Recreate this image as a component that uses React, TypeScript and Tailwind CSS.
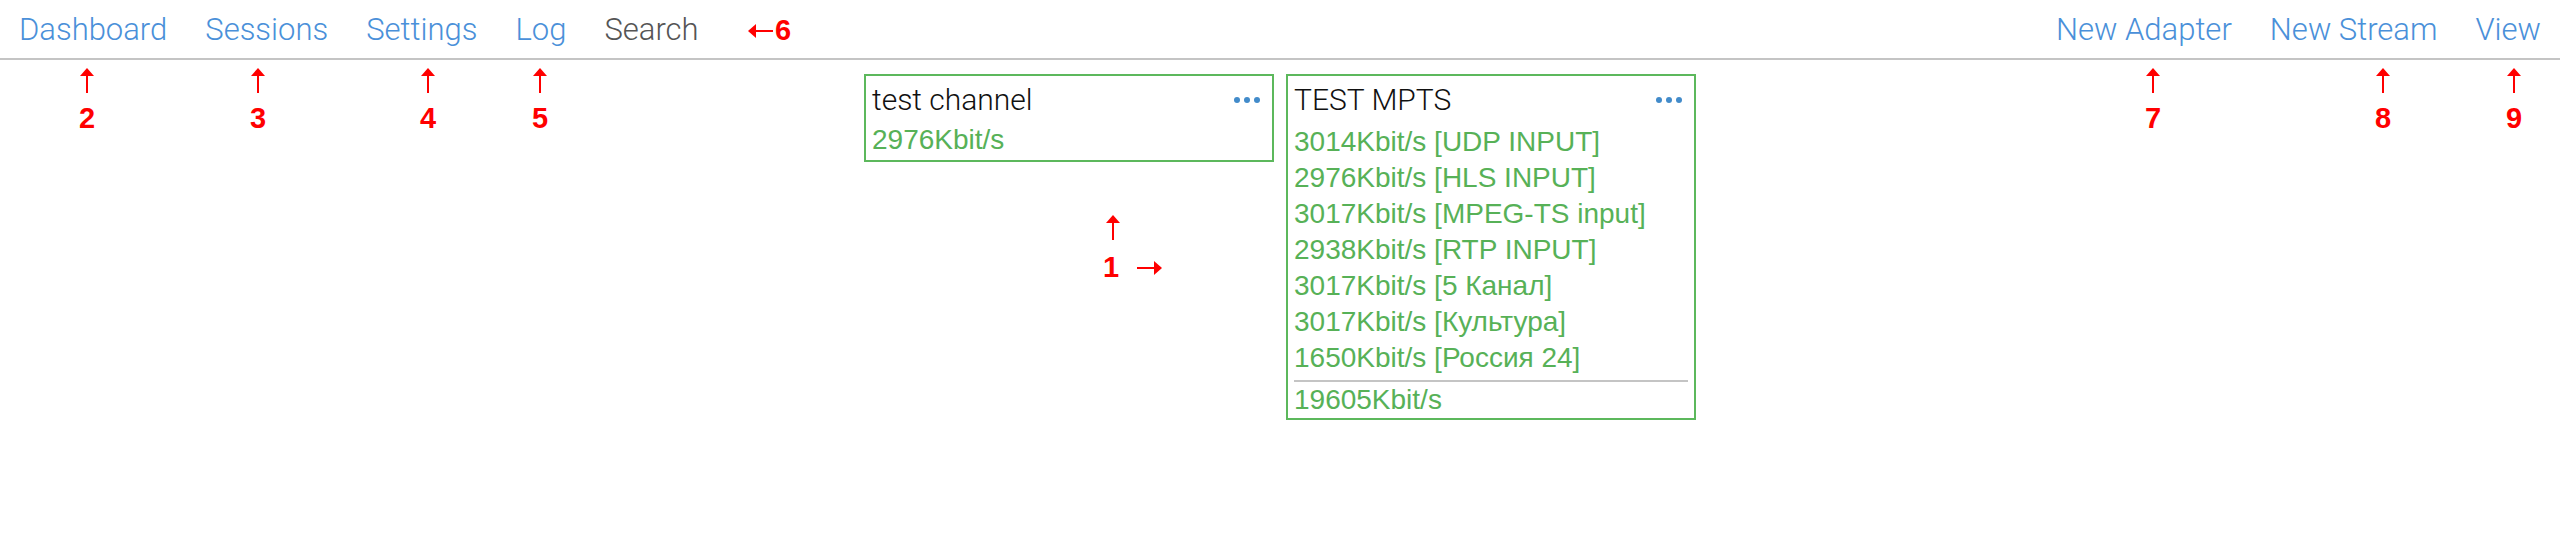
import React from "react"

const navLeft = [
    { label: "Dashboard", active: false },
    { label: "Sessions", active: false },
    { label: "Settings", active: false },
    { label: "Log", active: false },
    { label: "Search", active: true },
]

const navRight = ["New Adapter", "New Stream", "View"]

const mptsInputs = [
    "3014Kbit/s [UDP INPUT]",
    "2976Kbit/s [HLS INPUT]",
    "3017Kbit/s [MPEG-TS input]",
    "2938Kbit/s [RTP INPUT]",
    "3017Kbit/s [5 Канал]",
    "3017Kbit/s [Культура]",
    "1650Kbit/s [Россия 24]",
]

function Dots() {
    return (
        <div className="flex items-center gap-[4px] mr-[6px]">
            <span className="block w-[6px] h-[6px] rounded-full bg-[#428bca]" />
            <span className="block w-[6px] h-[6px] rounded-full bg-[#428bca]" />
            <span className="block w-[6px] h-[6px] rounded-full bg-[#428bca]" />
        </div>
    )
}

function CardTitle({ title }: { title: string }) {
    return (
        <div className="flex items-center justify-between leading-[40px]">
            <span className="text-[30px] font-light text-[#111111] font-['Roboto',sans-serif]">{title}</span>
            <Dots />
        </div>
    )
}

function UpArrow() {
    return (
        <svg width="14" height="25" viewBox="0 0 14 25" className="block">
            <polygon points="7,0 14,8 0,8" fill="#ff0000" />
            <rect x="6" y="7" width="2" height="18" fill="#ff0000" />
        </svg>
    )
}

function SideArrow({ dir }: { dir: "left" | "right" }) {
    return (
        <svg width="25" height="14" viewBox="0 0 25 14" className="block">
            {dir === "left" ? (
                <>
                    <polygon points="0,7 8,0 8,14" fill="#ff0000" />
                    <rect x="7" y="6" width="18" height="2" fill="#ff0000" />
                </>
            ) : (
                <>
                    <polygon points="25,7 17,0 17,14" fill="#ff0000" />
                    <rect x="0" y="6" width="18" height="2" fill="#ff0000" />
                </>
            )}
        </svg>
    )
}

// numbered markers under the nav links
const markers = [
    { n: "2", cls: "left-[72px]" },
    { n: "3", cls: "left-[243px]" },
    { n: "4", cls: "left-[413px]" },
    { n: "5", cls: "left-[525px]" },
    { n: "7", cls: "left-[2138px]" },
    { n: "8", cls: "left-[2368px]" },
    { n: "9", cls: "left-[2499px]" },
]

export default function App() {
    return (
        <div className="relative min-h-[552px] bg-white font-['Liberation_Sans',Arial,sans-serif]">
            <nav className="flex justify-between h-[60px] border-b-2 border-[#c4c4c4]">
                <ul className="flex">
                    {navLeft.map((item) => (
                        <li
                            key={item.label}
                            className={
                                "px-[19px] pt-[1px] leading-[57px] text-[31px] font-light font-['Roboto',sans-serif] " +
                                (item.active ? "text-[#555555]" : "text-[#4a90d9]")
                            }
                        >
                            {item.label}
                        </li>
                    ))}
                </ul>
                <ul className="flex">
                    {navRight.map((label) => (
                        <li
                            key={label}
                            className="px-[19px] pt-[1px] leading-[57px] text-[31px] font-light font-['Roboto',sans-serif] text-[#4a90d9]"
                        >
                            {label}
                        </li>
                    ))}
                </ul>
            </nav>

            <main className="flex justify-center items-start gap-[12px] pt-[14px]">
                <div className="w-[410px] border-2 border-[#5cb85c] px-[6px] pt-[4px]">
                    <CardTitle title="test channel" />
                    <div className="text-[28px] leading-[40px] text-[#57b157]">2976Kbit/s</div>
                </div>

                <div className="w-[410px] border-2 border-[#5cb85c] px-[6px] pt-[4px]">
                    <CardTitle title="TEST MPTS" />
                    <div className="mt-[4px]">
                        {mptsInputs.map((row) => (
                            <div key={row} className="text-[28px] leading-[36px] text-[#57b157]">
                                {row}
                            </div>
                        ))}
                    </div>
                    <div className="mt-[4px] h-[2px] bg-[#c4c4c4]" />
                    <div className="text-[28px] leading-[36px] text-[#57b157]">19605Kbit/s</div>
                </div>
            </main>

            {/* red annotation marks */}
            {markers.map((m) => (
                <div key={m.n} className={"absolute top-[68px] w-[30px] flex flex-col items-center " + m.cls}>
                    <UpArrow />
                    <span className="mt-[11px] text-[29px] leading-[29px] font-bold text-[#ff0000]">{m.n}</span>
                </div>
            ))}

            <div className="absolute left-[748px] top-[16px] flex items-center gap-[2px]">
                <SideArrow dir="left" />
                <span className="text-[29px] leading-[29px] font-bold text-[#ff0000]">6</span>
            </div>

            <div className="absolute left-[1106px] top-[215px]">
                <UpArrow />
            </div>
            <div className="absolute left-[1103px] top-[253px] flex items-center gap-[18px]">
                <span className="text-[29px] leading-[29px] font-bold text-[#ff0000]">1</span>
                <SideArrow dir="right" />
            </div>
        </div>
    )
}
